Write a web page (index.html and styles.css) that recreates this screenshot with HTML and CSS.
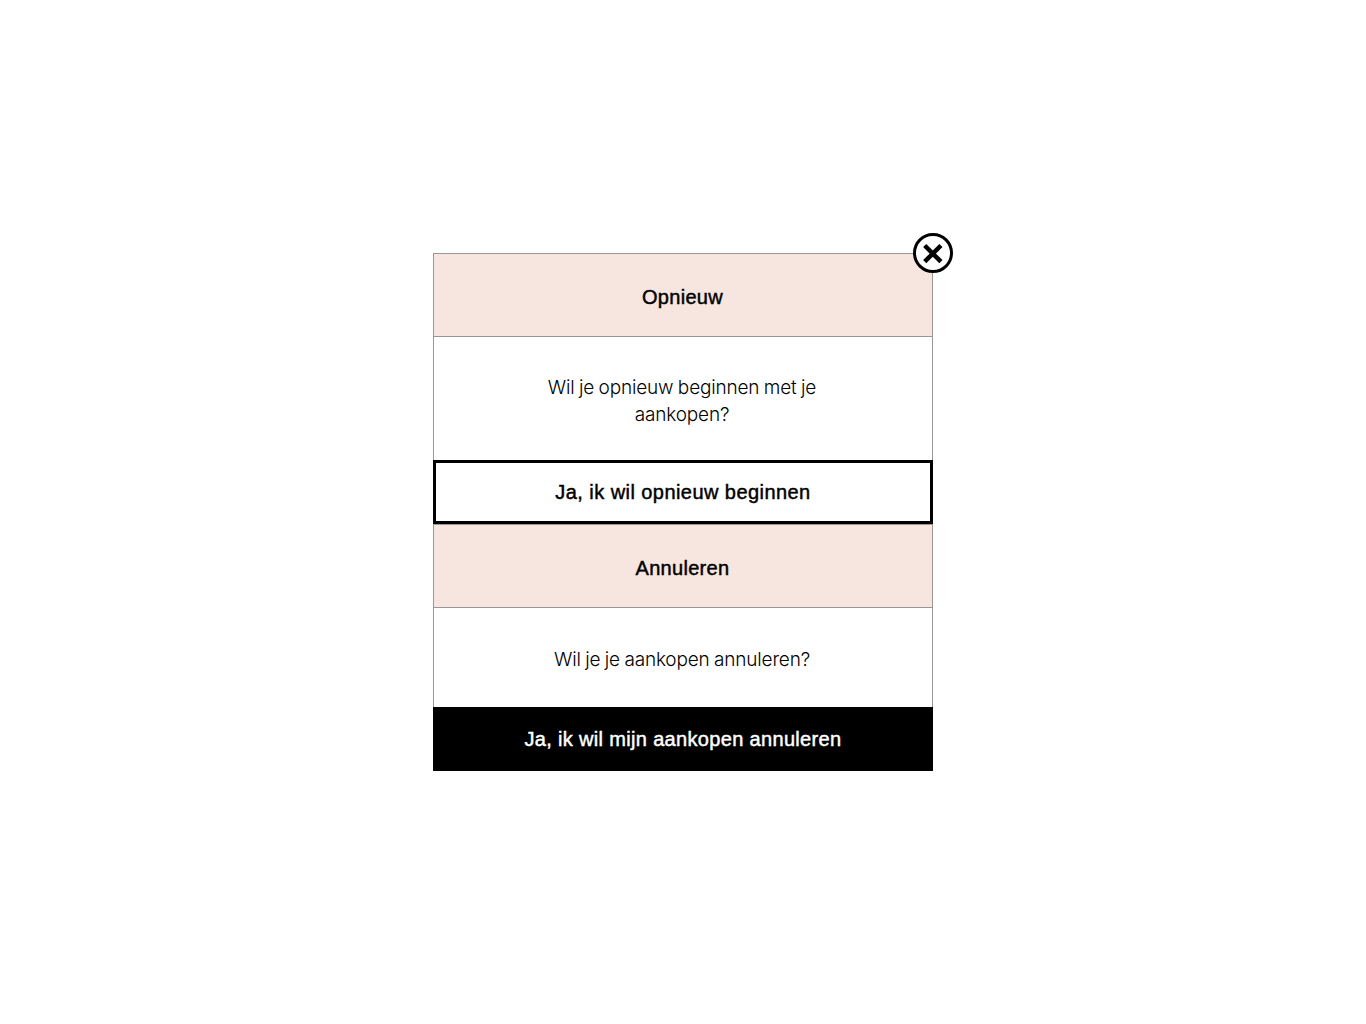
FILE: index.html
```html
<!DOCTYPE html>
<html lang="nl">
<head>
<meta charset="utf-8">
<title>Opnieuw</title>
<link rel="stylesheet" href="styles.css">
</head>
<body>
<main class="dialog">
  <h2 class="heading">Opnieuw</h2>
  <p class="message message-tall">Wil je opnieuw beginnen met je<br>aankopen?</p>
  <button class="button button-outline">Ja, ik wil opnieuw beginnen</button>
  <h2 class="heading">Annuleren</h2>
  <p class="message">Wil je je aankopen annuleren?</p>
  <button class="button button-solid">Ja, ik wil mijn aankopen annuleren</button>
  <button class="close" aria-label="Sluiten">
    <svg width="40" height="40" viewBox="0 0 40 40">
      <circle cx="20" cy="20" r="18.5" fill="#fff" stroke="#000" stroke-width="3"/>
      <path d="M11.7 12.5L27.9 28.7M27.9 12.5L11.7 28.7" stroke="#000" stroke-width="4.5"/>
    </svg>
  </button>
</main>
</body>
</html>
```
FILE: styles.css
```css
* {
  box-sizing: border-box;
}

body {
  margin: 0;
  min-height: 100vh;
  display: flex;
  align-items: center;
  justify-content: center;
  background: #fff;
  color: #000;
  font-family: "Liberation Sans", Arial, sans-serif;
}

.dialog {
  position: relative;
  width: 500px;
}

.heading,
.message,
.button {
  width: 100%;
  margin: 0;
  display: flex;
  align-items: center;
  justify-content: center;
  text-align: center;
  white-space: nowrap;
}

.heading {
  height: 84px;
  padding: 4px 1px 0 0;
  border: 1px solid #979797;
  background: #f6e6df;
  font-size: 20px;
  font-weight: 400;
  letter-spacing: 0.3px;
  -webkit-text-stroke: 0.45px currentColor;
}

.message {
  display: block;
  height: 99px;
  padding: 38px 2px 0 0;
  border: solid #979797;
  border-width: 0 1px;
  font-family: Inter, sans-serif;
  font-size: 19px;
  font-weight: 300;
  line-height: 27px;
  letter-spacing: -0.17px;
  word-spacing: -0.7px;
}

.message-tall {
  height: 123px;
  padding-top: 37px;
}

.button {
  height: 64px;
  padding: 0;
  border: 3px solid #000;
  border-radius: 0;
  font: 400 20px "Liberation Sans", Arial, sans-serif;
  letter-spacing: 0.33px;
  -webkit-text-stroke: 0.45px currentColor;
}

.button-outline {
  background: #fff;
  color: #000;
  letter-spacing: 0.44px;
}

.button-solid {
  background: #000;
  color: #fff;
}

.close {
  position: absolute;
  top: -20px;
  right: -20px;
  width: 40px;
  height: 40px;
  padding: 0;
  border: 0;
  background: none;
}

.close svg {
  display: block;
}
```
